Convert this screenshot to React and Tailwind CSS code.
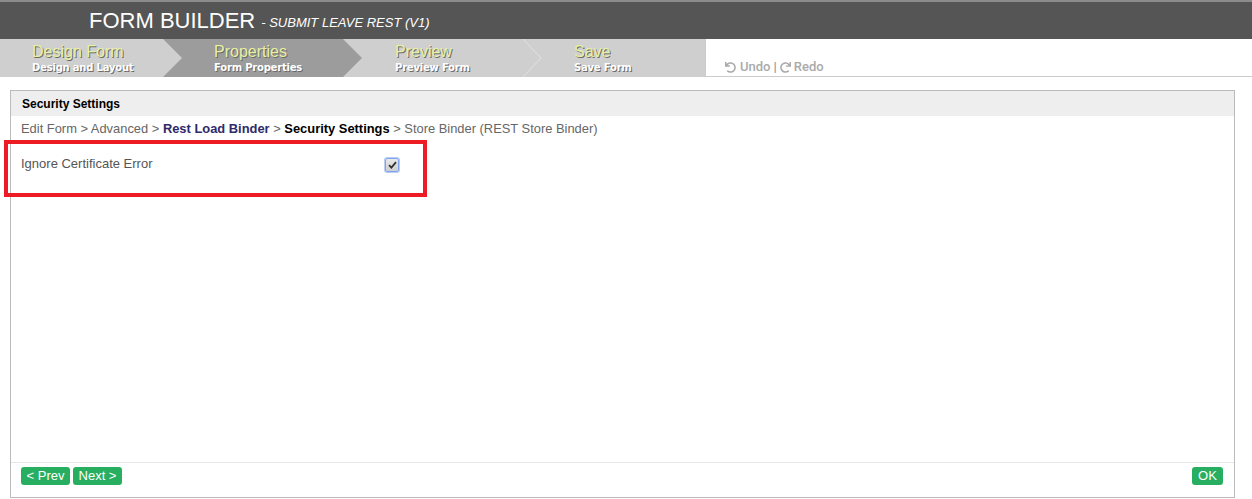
import React from "react";
import { FaUndo, FaRedo } from "react-icons/fa";

const tabs = [
  { t: "Design Form", s: "Design and Layout", w: "w-[163px]", pl: "pl-[32px]" },
  { t: "Properties", s: "Form Properties", w: "w-[180px]", pl: "pl-[51px]", active: true },
  { t: "Preview", s: "Preview Form", w: "w-[180px]", pl: "pl-[52px]" },
  { t: "Save", s: "Save Form", w: "w-[182px]", pl: "pl-[51px]", sep: true },
];

function Tab({ tab }) {
  return (
    <div className={`relative h-full ${tab.w} shrink-0`}>
      {tab.active && (
        <div className="absolute left-0 top-0 h-full w-[199px] bg-[#9c9c9c] [clip-path:polygon(0_0,180px_0,199px_19px,180px_38px,0_38px,19px_19px)]" />
      )}
      {tab.sep && (
        <svg className="absolute left-0 top-0" width="20" height="38" viewBox="0 0 20 38">
          <polyline points="0,0 18,19 0,38" fill="none" stroke="#e2e2e2" strokeWidth="1" />
        </svg>
      )}
      <div className={`relative ${tab.pl} pt-[3px]`}>
        <div className="text-[16px] leading-[19px] text-[#e9f0a2] [text-shadow:1px_1px_0_#6a6a6a] font-['Liberation_Sans',Arial,sans-serif]">
          {tab.t}
        </div>
        <div className="text-[10px] leading-[13px] font-bold text-white [text-shadow:1px_1px_0_#6a6a6a] font-['DejaVu_Sans',Tahoma,sans-serif] tracking-[-0.2px]">
          {tab.s}
        </div>
      </div>
    </div>
  );
}

export default function App() {
  return (
    <div className="w-[1252px] h-[499px] bg-white overflow-hidden relative font-['Liberation_Sans',Arial,sans-serif]">
      {/* Top bar */}
      <div className="h-[39px] bg-[#555555] border-t-2 border-[#8c8c8c] flex items-center pl-[89px] gap-[6px]">
        <span className="text-white text-[22px] leading-none">FORM BUILDER</span>
        <span className="text-white text-[13px] italic leading-none mt-[4px]">- SUBMIT LEAVE REST (V1)</span>
      </div>
      {/* Tabs */}
      <div className="flex h-[38px]">
        <div className="flex bg-[#cfcfcf] h-full">
          {tabs.map((t) => (
            <Tab key={t.t} tab={t} />
          ))}
        </div>
        <div className="flex-1 border-b border-l border-[#cccccc] flex items-end pl-[19px] pb-[1px]">
          <div className="flex items-center text-[13px] text-[#aaaaaa] font-['Roboto',Arial,sans-serif] font-medium leading-[16px]">
            <FaUndo className="w-[11px] h-[11px] mr-[4px]" />
            <span>Undo</span>
            <span className="mx-[3px] font-bold text-[#999]">|</span>
            <FaRedo className="w-[11px] h-[11px] mr-[3px]" />
            <span>Redo</span>
          </div>
        </div>
      </div>

      {/* Panel */}
      <div className="ml-[10px] mt-[13px] w-[1225px] h-[408px] border border-[#bbbbbb] flex flex-col">
        <div className="h-[25px] bg-[#eeeeee] flex items-center pl-[11px] text-[12px] font-bold text-black">
          Security Settings
        </div>
        <div className="flex-1 pl-[10px]">
          <div className="pt-[5px] text-[12.9px] leading-[15px] text-[#666666]">
            Edit Form &gt; Advanced &gt;{" "}
            <span className="font-bold text-[#2e2a6a]">Rest Load Binder</span> &gt;{" "}
            <span className="font-bold text-black">Security Settings</span> &gt; Store Binder (REST Store Binder)
          </div>
          <div className="mt-[20px] flex items-start">
            <div className="w-[364px] text-[13px] leading-[15px] text-[#555555]">Ignore Certificate Error</div>
            <div className="mt-[2px] w-[14px] h-[14px] rounded-[2px] border border-[#7fa3ee] bg-gradient-to-b from-[#e8e8e8] to-[#cfcfcf] flex items-center justify-center shadow-[0_0_0_1px_#b9cdf5]">
              <svg width="9" height="8" viewBox="0 0 9 8">
                <path d="M1 4.2 L3.4 6.6 L8 1.2" fill="none" stroke="#333" strokeWidth="1.8" />
              </svg>
            </div>
          </div>
        </div>
        <div className="h-[35px] border-t border-[#e6e6e6] flex items-start justify-between pt-[4px] pl-[10px] pr-[11px]">
          <div className="flex gap-[3px]">
            <button className="h-[18px] w-[49px] rounded-[3px] bg-[#27ae60] text-white text-[13px] leading-[18px]">&lt; Prev</button>
            <button className="h-[18px] w-[49px] rounded-[3px] bg-[#27ae60] text-white text-[13px] leading-[18px]">Next &gt;</button>
          </div>
          <button className="h-[18px] w-[31px] rounded-[3px] bg-[#27ae60] text-white text-[13px] leading-[18px]">OK</button>
        </div>
      </div>

      {/* Red annotation box */}
      <div className="absolute left-[4px] top-[140px] w-[423px] h-[57px] border-4 border-[#ed1c24]" />
    </div>
  );
}
